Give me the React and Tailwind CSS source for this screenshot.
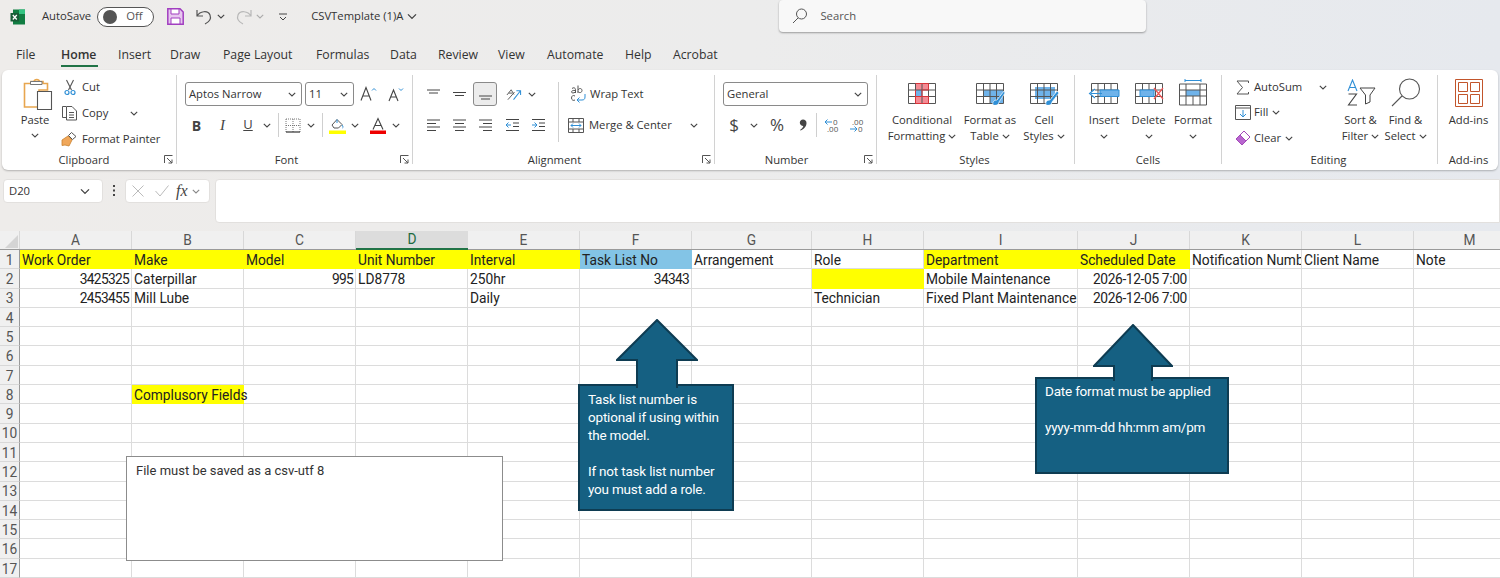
import React from "react";

const UI = "font-['Open_Sans','Noto_Sans',sans-serif]";
const COLS = "grid-cols-[20px_112px_112px_112px_112px_112px_112px_120px_112px_154px_112px_112px_112px_112px]";

function Chev({ className = "", color = "#444" }) {
  return (
    <svg width="8" height="5" viewBox="0 0 8 5" className={"shrink-0 " + className}>
      <path d="M.8.8 4 4 7.2.8" fill="none" stroke={color} strokeWidth="1.1" />
    </svg>
  );
}

function Launcher() {
  return (
    <svg width="9" height="9" viewBox="0 0 9 9" className="absolute right-[3px] top-[3px]">
      <path d="M.5 8V.5H8.5M3 3l5 5M8 4.500V8H4.500" fill="none" stroke="#555" strokeWidth="1" />
    </svg>
  );
}

function Group({ w, label, children, launcher = true, divider = true, pr = "" }) {
  return (
    <div className={"flex flex-col shrink-0 h-[89px] mt-[5px] " + w + " " + (divider ? "border-r border-[#d2d2d2]" : "")}>
      <div className="flex h-[77px] shrink-0">{children}</div>
      <div className={"relative h-[15px] shrink-0 text-center text-[11.25px] leading-[15px] text-[#333] " + pr}>
        {label}
        {launcher && <Launcher />}
      </div>
    </div>
  );
}

function GridIcon({ children, w = 30, h = 24 }) {
  return (
    <svg width={w} height={h} viewBox={`0 0 ${w} ${h}`} className="shrink-0">
      {children}
    </svg>
  );
}

const gridLines = (
  <path d="M1.500 2.500H28.500V22.500H1.500ZM1.500 9H28.500M1.500 15.500H28.500M8.500 2.500V22.500M15 2.500V22.500M21.500 2.500V22.500" fill="none" stroke="#555" strokeWidth="1" />
);

function BigBtn({ w, icon, lines, chevInline, chevBelow }) {
  return (
    <div className={"flex flex-col items-center shrink-0 text-[11.25px] leading-[16px] text-[#333] " + w}>
      <div className="h-[28px] mt-[4px] flex items-center justify-center">{icon}</div>
      <div className="mt-[5px]">
        {lines.map((l, i) => (
          <div key={i} className="flex items-center justify-center gap-[3px] whitespace-nowrap">
            {l}
            {chevInline && i === lines.length - 1 && <Chev />}
          </div>
        ))}
      </div>
      {chevBelow && <Chev className="mt-[6px]" />}
    </div>
  );
}

function Slot({ w, children, className = "" }) {
  return <div className={"flex items-center justify-center shrink-0 " + w + " " + className}>{children}</div>;
}

function Lines({ kind }) {
  const d = {
    top: "M1 3H14M3 6H12",
    mid: "M1 5.500H14M3 8.500H12",
    bot: "M1 9H14M3 12H12",
    left: "M1 2H14M1 5.500H10M1 9H14M1 12.500H10",
    center: "M1 2H14M3 5.500H12M1 9H14M3 12.500H12",
    right: "M1 2H14M5 5.500H14M1 9H14M5 12.500H14",
  }[kind];
  return (
    <svg width="15" height="14" viewBox="0 0 15 14">
      <path d={d} stroke="#444" strokeWidth="1" fill="none" />
    </svg>
  );
}

function SmallRow({ icon, text, className = "", children }) {
  return (
    <div className={"flex items-center text-[11.25px] text-[#333] h-[26px] whitespace-nowrap " + className}>
      <div className="w-[19px] flex justify-center shrink-0">{icon}</div>
      <span className="ml-[1px]">{text}</span>
      {children}
    </div>
  );
}

function Select({ w, text, className = "" }) {
  return (
    <div className={"flex items-center justify-between h-[24px] rounded-[3px] border border-[#8a8a8a] bg-white pl-[3px] pr-[5px] text-[11.25px] text-[#333] " + w + " " + className}>
      <span>{text}</span>
      <Chev />
    </div>
  );
}

function VSep({ className = "" }) {
  return <div className={"w-px h-[24px] bg-[#cfcfcf] shrink-0 " + className} />;
}

function Ribbon() {
  return (
    <div className={"mx-[2px] h-[100px] rounded-[6px] bg-white flex shadow-[0_1px_2px_rgba(0,0,0,0.25)] " + UI}>
      {/* Clipboard */}
      <Group w="w-[175px]" label="Clipboard" pr="pr-[10px]">
        <div className="w-[60px] pl-[6px] flex flex-col items-center text-[11.25px] text-[#333]">
          <svg width="30" height="33" viewBox="0 0 30 33" className="mt-[3px] ml-[5px]">
            <path d="M1.500 5.500H8V3.500H11C11.500 1 16 1 16.500 3.500H20V5.500H24.500V12H16V29H1.500Z" fill="#fff" stroke="#e8a64f" strokeWidth="1.600" />
            <path d="M7.500 3.500H19V6.500H7.500Z" fill="#fff" stroke="#777" strokeWidth="1" />
            <path d="M14.500 13.500H28.500V31.500H14.500Z" fill="#fff" stroke="#555" strokeWidth="1.100" />
          </svg>
          <span className="mt-[1px] leading-[16px]">Paste</span>
          <Chev className="mt-[5px]" />
        </div>
        <div className="flex flex-col -mt-[1px]">
          <SmallRow
            icon={
              <svg width="12" height="17" viewBox="0 0 12 17" className="-ml-[4px]">
                <path d="M2.500 1 7.500 11M9.500 1 4.500 11" stroke="#555" strokeWidth="1.100" fill="none" />
                <circle cx="3" cy="13.500" r="2" fill="none" stroke="#2f8fd6" strokeWidth="1.200" />
                <circle cx="9" cy="13.500" r="2" fill="none" stroke="#2f8fd6" strokeWidth="1.200" />
              </svg>
            }
            text="Cut"
          />
          <SmallRow
            icon={
              <svg width="17" height="16" viewBox="0 0 17 16" className="-ml-[4px]">
                <path d="M5 1.500H1.500V12.500H5" fill="none" stroke="#555" />
                <path d="M5.500 1.500H11L15.500 6V15H5.500ZM8 7.500H13M8 10H13M8 12.500H13" fill="#fff" stroke="#555" />
              </svg>
            }
            text="Copy"
          >
            <Chev className="ml-[22px]" />
          </SmallRow>
          <SmallRow
            icon={
              <svg width="17" height="16" viewBox="0 0 17 16" className="-ml-[4px]">
                <path d="M1 9 7 5l4 4-3 6-4-1-3 .5Z" fill="#f0a75a" stroke="#c9822f" strokeWidth=".8" />
                <path d="M7.500 4.500 10.500 1.500 15 5.500 11.500 8.500Z" fill="#fff" stroke="#555" />
              </svg>
            }
            text="Format Painter"
          />
        </div>
      </Group>
      {/* Font */}
      <Group w="w-[236px]" label="Font" pr="pr-[16px]">
        <div className="flex flex-col pl-[8px] pt-[7px]">
          <div className="flex items-center">
            <Select w="w-[117px]" text="Aptos Narrow" />
            <Select w="w-[49px]" text="11" className="ml-[3px]" />
            <Slot w="w-[17px]" className="ml-[6px]">
              <svg width="17" height="16" viewBox="0 0 17 16">
                <path d="M1 14.500 6 1.500 11 14.500M3 10H9" fill="none" stroke="#444" strokeWidth="1.100" />
                <path d="M12 4.500 14 2.500 16 4.500" fill="none" stroke="#2f8fd6" />
              </svg>
            </Slot>
            <Slot w="w-[17px]" className="ml-[10px]">
              <svg width="16" height="15" viewBox="0 0 16 15">
                <path d="M1 14 5.500 3 10 14M2.500 10H8.500" fill="none" stroke="#444" strokeWidth="1.100" />
                <path d="M11 1.500 13 3.500 15 1.500" fill="none" stroke="#2f8fd6" />
              </svg>
            </Slot>
          </div>
          <div className="flex items-center mt-[7px] h-[24px] text-[#444]">
            <Slot w="w-[13px]" className="ml-[5px] text-[14px] font-bold">B</Slot>
            <Slot w="w-[13px]" className="ml-[13px] italic text-[15px] font-['Liberation_Serif',serif]">I</Slot>
            <Slot w="w-[12px]" className="ml-[13px] underline text-[13px]">U</Slot>
            <Chev className="ml-[9px]" />
            <VSep className="ml-[7px]" />
            <Slot w="w-[16px]" className="ml-[6px]">
              <svg width="16" height="15" viewBox="0 0 16 15">
                <path d="M1 1H15M1 7.500H15M1 1V14M8 1V14M15 1V14" stroke="#777" strokeWidth="1" strokeDasharray="1 1" fill="none" />
                <path d="M1 14H15" stroke="#333" strokeWidth="1.200" />
              </svg>
            </Slot>
            <Chev className="ml-[6px]" />
            <VSep className="ml-[7px]" />
            <Slot w="w-[17px]" className="ml-[6px]">
              <svg width="17" height="17" viewBox="0 0 17 17">
                <path d="M3 8 8 2.500l5 5-3.500 3.500H5Z" fill="#fff" stroke="#555" />
                <path d="M8 2.500V6M13 8c1 1.500 1.500 2.500.5 3" fill="none" stroke="#2f8fd6" />
                <path d="M0 13.500H17V17H0Z" fill="#ffff00" />
              </svg>
            </Slot>
            <Chev className="ml-[5px]" />
            <Slot w="w-[16px]" className="ml-[11px]">
              <svg width="16" height="17" viewBox="0 0 16 17">
                <path d="M3 12.500 8 1.500 13 12.500M5 8.500H11" fill="none" stroke="#444" strokeWidth="1.100" />
                <path d="M0 13.500H16V17H0Z" fill="#ee0000" />
              </svg>
            </Slot>
            <Chev className="ml-[6px]" />
          </div>
        </div>
      </Group>
      {/* Alignment */}
      <Group w="w-[302px]" label="Alignment" pr="pr-[18px]">
        <div className="flex flex-col pl-[12px] pt-[7px] w-[145px]">
          <div className="flex items-center h-[24px]">
            <Slot w="w-[16px]"><Lines kind="top" /></Slot>
            <Slot w="w-[16px]" className="ml-[10px]"><Lines kind="mid" /></Slot>
            <Slot w="w-[24px]" className="ml-[6px] h-[24px] rounded-[3px] border border-[#8a8a8a] bg-[#ececec]"><Lines kind="bot" /></Slot>
            <Slot w="w-[16px]" className="ml-[9px]">
              <svg width="17" height="15" viewBox="0 0 17 15">
                <path d="M1 8 5.500 2.500M5.500 2.500l3 5M2.800 6h4M2 13l7-8" fill="none" stroke="#555" />
                <path d="M8 13 15 4M11 3.500h4.500V8" fill="none" stroke="#2f8fd6" strokeWidth="1.100" />
              </svg>
            </Slot>
            <Chev className="ml-[6px]" />
          </div>
          <div className="flex items-center h-[24px] mt-[7px]">
            <Slot w="w-[16px]"><Lines kind="left" /></Slot>
            <Slot w="w-[16px]" className="ml-[10px]"><Lines kind="center" /></Slot>
            <Slot w="w-[16px]" className="ml-[10px]"><Lines kind="right" /></Slot>
            <Slot w="w-[16px]" className="ml-[11px]">
              <svg width="15" height="14" viewBox="0 0 15 14">
                <path d="M1 1.500H14M8 5H14M8 8.500H14M1 12.500H14" stroke="#444" fill="none" />
                <path d="M6 7H1M3.500 4.500 1 7l2.500 2.500" stroke="#2f8fd6" fill="none" />
              </svg>
            </Slot>
            <Slot w="w-[16px]" className="ml-[10px]">
              <svg width="15" height="14" viewBox="0 0 15 14">
                <path d="M1 1.500H14M8 5H14M8 8.500H14M1 12.500H14" stroke="#444" fill="none" />
                <path d="M1 7H6M3.500 4.500 6 7 3.500 9.500" stroke="#2f8fd6" fill="none" />
              </svg>
            </Slot>
          </div>
        </div>
        <div className="w-px h-[60px] mt-[7px] bg-[#cfcfcf] shrink-0" />
        <div className="flex flex-col pt-[7px] pl-[10px] text-[11.25px] text-[#333] whitespace-nowrap">
          <div className="flex items-center h-[24px]">
            <svg width="17" height="18" viewBox="0 0 17 18" className="mr-[3px] ml-[1px]">
              <path d="M2 3.500C3.500 2 5.500 3 5.500 4.500V8M5.500 5.500C3 5 1.500 6 1.500 7S3.500 8.500 5.500 7M8 .5V8M8 5C9.500 2.500 12 3.500 12 5.500S9.500 8.500 8 6.500M5 11C3 9.800 1.500 11 1.500 13S3.500 16 5 15" fill="none" stroke="#555" />
              <path d="M15 9v3c0 2-1 3-3 3H7M9.500 12.500 7 15l2.500 2.500" fill="none" stroke="#2f8fd6" />
            </svg>
            Wrap Text
          </div>
          <div className="flex items-center h-[24px] mt-[7px] pt-[1px]">
            <svg width="16" height="15" viewBox="0 0 16 15" className="mr-[5px] -ml-[1px]">
              <path d="M.5.500H15.500V14.500H.5ZM.5 4H15.500M.5 11H15.500M5 .5V4M11 .5V4M5 11V14.500M11 11V14.500" fill="#fff" stroke="#555" />
              <path d="M3 7.500H13M5 5.500 3 7.500 5 9.500M11 5.500l2 2-2 2" fill="none" stroke="#2f8fd6" />
            </svg>
            Merge &amp; Center
            <Chev className="ml-[18px]" />
          </div>
        </div>
      </Group>
      {/* Number */}
      <Group w="w-[162px]" label="Number" pr="pr-[18px]">
        <div className="flex flex-col pl-[8px] pt-[7px]">
          <Select w="w-[145px]" text="General" />
          <div className="flex items-center h-[24px] mt-[7px] text-[#444]">
            <Slot w="w-[12px]" className="ml-[5px] text-[17px]">$</Slot>
            <Chev className="ml-[10px]" />
            <Slot w="w-[18px]" className="ml-[10px] text-[17px]">%</Slot>
            <Slot w="w-[10px]" className="ml-[12px]">
              <svg width="8" height="12" viewBox="0 0 8 12">
                <path d="M4 .5C6 .5 7.500 2 7.500 4 7.500 7.500 5 10 1.500 11.500L1 11C3 9.500 4 8.500 4.300 7 2.500 7 .8 5.800.8 3.800.8 1.800 2.200.5 4 .5Z" fill="#444" />
              </svg>
            </Slot>
            <VSep className="ml-[8px]" />
            <Slot w="w-[18px]" className="ml-[7px]">
              <svg width="18" height="15" viewBox="0 0 18 15">
                <text x="9" y="6.500" fontSize="8" fill="#555" fontFamily="Open Sans">0</text>
                <text x="3" y="14" fontSize="8" fill="#555" fontFamily="Open Sans">.00</text>
                <path d="M8 4H1M3.500 1.500 1 4l2.500 2.500" fill="none" stroke="#2f8fd6" />
              </svg>
            </Slot>
            <Slot w="w-[18px]" className="ml-[7px]">
              <svg width="18" height="15" viewBox="0 0 18 15">
                <text x="3" y="6.500" fontSize="8" fill="#555" fontFamily="Open Sans">.00</text>
                <text x="9" y="14" fontSize="8" fill="#555" fontFamily="Open Sans">0</text>
                <path d="M1 11H8M5.500 8.500 8 11l-2.500 2.500" fill="none" stroke="#2f8fd6" />
              </svg>
            </Slot>
          </div>
        </div>
      </Group>
      {/* Styles */}
      <Group w="w-[198px]" label="Styles" launcher={false} pr="pr-[2px]">
        <div className="w-[5px] shrink-0" />
        <BigBtn
          w="w-[80px]"
          lines={["Conditional", "Formatting"]}
          chevInline
          icon={
            <GridIcon>
              <path d="M8.500 2.500H21.500V9H8.500ZM8.500 15.500H21.500V22.500H8.500Z" fill="#f48b94" />
              <path d="M8.500 9H15V15.500H8.500Z" fill="#6fb3ea" />
              {gridLines}
              <path d="M8.500 2.500H21.500V9H15V15.500H8.500V9M8.500 15.500H21.500V22.500H8.500Z" fill="none" stroke="#d9343a" />
            </GridIcon>
          }
        />
        <BigBtn
          w="w-[56px]"
          lines={["Format as", "Table"]}
          chevInline
          icon={
            <GridIcon>
              <path d="M8.500 9H28.500V22.500H15V15.500H8.500Z" fill="#6fb3ea" />
              {gridLines}
              <path d="M18 24C17 20 20 19 22 19L29 10 30 12 24 21C24 24 20 25 18 24Z" fill="#2f8fd6" stroke="#fff" strokeWidth=".7" />
            </GridIcon>
          }
        />
        <BigBtn
          w="w-[52px]"
          lines={["Cell", "Styles"]}
          chevInline
          icon={
            <GridIcon>
              <path d="M6 6H26V18H6Z" fill="#6fb3ea" />
              {gridLines}
              <path d="M17 24C16 20 19 19 21 19L28 10 30 12 23 21C23 24 19 25 17 24Z" fill="#2f8fd6" stroke="#fff" strokeWidth=".7" />
            </GridIcon>
          }
        />
      </Group>
      {/* Cells */}
      <Group w="w-[147px]" label="Cells" launcher={false}>
        <div className="w-[7px] shrink-0" />
        <BigBtn
          w="w-[44px]"
          lines={["Insert"]}
          chevBelow
          icon={
            <GridIcon w={32}>
              <path d="M3.500 2.500H29.500V22.500H3.500ZM3.500 9H29.500M3.500 15.500H29.500M10 2.500V22.500M16.500 2.500V22.500M23 2.500V22.500" fill="none" stroke="#555" />
              <path d="M12 9H31V15.500H12Z" fill="#6fb3ea" stroke="#2f8fd6" />
              <path d="M14 12.500H3M7 8 1.500 12.500 7 17" fill="#fff" stroke="#2f8fd6" strokeWidth="1.100" />
            </GridIcon>
          }
        />
        <BigBtn
          w="w-[45px]"
          lines={["Delete"]}
          chevBelow
          icon={
            <GridIcon w={30}>
              {gridLines}
              <path d="M6 9H20V15.500H6Z" fill="#6fb3ea" stroke="#2f8fd6" />
              <path d="M20 7 29 18M29 7 20 18" stroke="#ee5555" strokeWidth="1.200" />
            </GridIcon>
          }
        />
        <BigBtn
          w="w-[44px]"
          lines={["Format"]}
          chevBelow
          icon={
            <svg width="30" height="28" viewBox="0 0 30 28" className="shrink-0">
              <path d="M7 1.500H23M7 0V3M23 0V3" stroke="#2f8fd6" fill="none" />
              <path d="M8 11H22V17H8Z" fill="#6fb3ea" />
              <path d="M1.500 5H28.500V26H1.500ZM1.500 11H28.500M1.500 17H28.500M8 5V26M22 5V26M15 17V26" fill="none" stroke="#555" />
            </svg>
          }
        />
      </Group>
      {/* Editing */}
      <Group w="w-[216px]" label="Editing" launcher={false} pr="pr-[2px]">
        <div className="flex flex-col pl-[11px] w-[116px] shrink-0 -mt-[1px]">
          <SmallRow
            icon={
              <svg width="13" height="15" viewBox="0 0 13 15">
                <path d="M12.500 3V1H1L6.500 7.500 1 14H12.500V12" fill="none" stroke="#555" />
              </svg>
            }
            text="AutoSum"
            className="gap-[1px]"
          >
            <Chev className="ml-[16px]" />
          </SmallRow>
          <SmallRow
            icon={
              <svg width="16" height="15" viewBox="0 0 16 15">
                <path d="M.5.500H15.500V14.500H.5ZM.5 3H15.500" fill="none" stroke="#555" />
                <path d="M8 5V12M5 9l3 3 3-3" fill="none" stroke="#2f8fd6" />
              </svg>
            }
            text="Fill"
            className="gap-[1px] -mt-[1px]"
          >
            <Chev className="ml-[3px]" />
          </SmallRow>
          <SmallRow
            icon={
              <svg width="16" height="16" viewBox="0 0 16 16">
                <path d="M1 9 9 1l6 6-8 8Z" fill="#fff" stroke="#a348b8" />
                <path d="M1 9 5 5l6 6-4 4Z" fill="#b866cf" stroke="#a348b8" />
              </svg>
            }
            text="Clear"
            className="gap-[1px]"
          >
            <Chev className="ml-[3px]" />
          </SmallRow>
        </div>
        <BigBtn
          w="w-[45px]"
          lines={["Sort &", "Filter"]}
          chevInline
          icon={
            <svg width="30" height="28" viewBox="0 0 30 28">
              <path d="M2 12 6.500 1 11 12M3.500 8.500H9.500" fill="none" stroke="#2f8fd6" strokeWidth="1.100" />
              <path d="M2.500 15H10.500L2.500 26H11" fill="none" stroke="#444" strokeWidth="1.100" />
              <path d="M14 9H29L24 16V23L19.500 25V16Z" fill="#fff" stroke="#444" />
            </svg>
          }
        />
        <BigBtn
          w="w-[45px]"
          lines={["Find &", "Select"]}
          chevInline
          icon={
            <svg width="30" height="30" viewBox="0 0 30 30">
              <circle cx="18.500" cy="11" r="10" fill="none" stroke="#555" strokeWidth="1.100" />
              <path d="M11 18 1 28" stroke="#555" strokeWidth="1.100" />
            </svg>
          }
        />
      </Group>
      {/* Add-ins */}
      <Group w="w-[61px]" label="Add-ins" launcher={false} divider={false}>
        <BigBtn
          w="w-full"
          lines={["Add-ins"]}
          icon={
            <svg width="28" height="28" viewBox="0 0 28 28">
              <path d="M.5.500H27.500V27.500H.5Z" fill="none" stroke="#c2552b" />
              <path d="M3.500 3.500H12.500V12.500H3.500ZM15.500 3.500H24.500V12.500H15.500ZM3.500 15.500H12.500V24.500H3.500ZM15.500 15.500H24.500V24.500H15.500Z" fill="none" stroke="#c2552b" />
            </svg>
          }
        />
      </Group>
    </div>
  );
}

function TitleBar() {
  return (
    <div className={"h-[33px] flex items-center text-[#333] text-[11.25px] whitespace-nowrap " + UI}>
      <svg width="16" height="16" viewBox="0 0 16 16" className="ml-[10px] shrink-0">
        <path d="M3 0.500H15V15.500H3Z" fill="#107c41" />
        <path d="M9 .5H15V5H9Z" fill="#33c481" />
        <path d="M.5 4H9V12.500H.5Z" fill="#185c37" />
        <path d="M2.800 6 6.800 10.500M6.800 6 2.800 10.500" stroke="#fff" strokeWidth="1.300" />
      </svg>
      <span className="ml-[16px]">AutoSave</span>
      <div className="ml-[6px] w-[57px] h-[20px] rounded-full border border-[#555] flex items-center pl-[5px] shrink-0 bg-white">
        <div className="w-[14px] h-[14px] rounded-full bg-[#555]" />
        <span className="ml-[9px] text-[#555]">Off</span>
      </div>
      <svg width="17" height="17" viewBox="0 0 17 17" className="ml-[13px] shrink-0">
        <path d="M.8.8H13L16.200 4V16.200H.8Z" fill="#e7c7ef" stroke="#a13fc0" strokeWidth="1.500" />
        <path d="M4 1H12V6H4ZM4 10H13V16H4Z" fill="#fff" stroke="#a13fc0" />
      </svg>
      <svg width="17" height="17" viewBox="0 0 17 17" className="ml-[12px] shrink-0">
        <path d="M1 2V8H7M1 8C4 3 12 2 14 7 15.500 11 13 14 9 16" fill="none" stroke="#555" strokeWidth="1.200" />
      </svg>
      <Chev className="ml-[4px]" />
      <svg width="17" height="17" viewBox="0 0 17 17" className="ml-[10px] shrink-0">
        <path d="M16 2V8H10M16 8C13 3 5 2 3 7 1.500 11 4 14 8 16" fill="none" stroke="#b8b8b8" strokeWidth="1.200" />
      </svg>
      <Chev className="ml-[4px]" color="#aaa" />
      <svg width="8" height="8" viewBox="0 0 8 8" className="ml-[15px] shrink-0">
        <path d="M0 1H8M1 4 4 7 7 4" fill="none" stroke="#444" />
      </svg>
      <span className="ml-[24px]">CSVTemplate (1)A</span>
      <Chev className="ml-[5px] scale-125" />
      <div className="ml-[363px] w-[367px] h-[32px] -mt-[1px] rounded-[4px] bg-[#f8f8f8] shadow-[0_1px_2px_rgba(0,0,0,0.35)] flex items-center pl-[13px] text-[#555] shrink-0">
        <svg width="16" height="16" viewBox="0 0 16 16">
          <circle cx="9.500" cy="6" r="5" fill="none" stroke="#555" />
          <path d="M6 10 1 15" stroke="#555" />
        </svg>
        <span className="ml-[12px]">Search</span>
      </div>
    </div>
  );
}

function Tabs() {
  const tabs = [
    ["File", "w-[50px] pl-[16px]"],
    ["Home", "w-[57px] pl-[11px]"],
    ["Insert", "w-[53px] pl-[11px]"],
    ["Draw", "w-[52px] pl-[10px]"],
    ["Page Layout", "w-[94px] pl-[11px]"],
    ["Formulas", "w-[74px] pl-[10px]"],
    ["Data", "w-[48px] pl-[10px]"],
    ["Review", "w-[60px] pl-[10px]"],
    ["View", "w-[49px] pl-[10px]"],
    ["Automate", "w-[78px] pl-[10px]"],
    ["Help", "w-[48px] pl-[10px]"],
    ["Acrobat", "w-[60px] pl-[10px]"],
  ];
  return (
    <div className={"h-[37px] flex text-[12.25px] text-[#333] " + UI}>
      {tabs.map(([t, c]) => (
        <div key={t} className={"relative shrink-0 h-[37px] pt-[13px] leading-[18px] " + c}>
          {t === "Home" ? <span className="font-semibold">{t}</span> : <span>{t}</span>}
          {t === "Home" && <div className="absolute left-[11px] w-[37px] top-[32px] h-[2px] bg-[#217346]" />}
        </div>
      ))}
    </div>
  );
}

function FormulaBar() {
  return (
    <div className={"h-[61px] flex items-start pt-[9px] pl-[3px] " + UI}>
      <div className="w-[100px] h-[24px] rounded-[4px] bg-white border border-[#e2e0de] flex items-center pl-[5px] text-[11.25px] text-[#333] shrink-0">
        D20
        <Chev className="ml-[51px] scale-125" />
      </div>
      <svg width="4" height="14" viewBox="0 0 4 14" className="ml-[9px] mt-[5px] shrink-0">
        <path d="M1 2H3M1 6.500H3M1 11H3" stroke="#444" strokeWidth="2" />
      </svg>
      <div className="ml-[9px] w-[85px] h-[24px] rounded-[4px] bg-white border border-[#e2e0de] flex items-center pl-[6px] shrink-0">
        <svg width="12" height="12" viewBox="0 0 12 12" className="shrink-0">
          <path d="M.5.500 11.500 11.500M11.500.5.5 11.500" stroke="#bbb" />
        </svg>
        <svg width="14" height="12" viewBox="0 0 14 12" className="ml-[11px] shrink-0">
          <path d="M.5 6 5 11 13.500.5" stroke="#bbb" fill="none" />
        </svg>
        <span className="ml-[7px] italic text-[16px] text-[#444] font-['Liberation_Serif',serif]">fx</span>
        <Chev className="ml-[4px]" color="#888" />
      </div>
      <div className="ml-[5px] flex-1 h-[44px] rounded-l-[4px] bg-white border border-[#e2e0de]" />
    </div>
  );
}

const Y = "bg-[#ffff00] border-[#ffff00]";
const rows = [
  [["Work Order", "", Y], ["Make", "", Y], ["Model", "", Y], ["Unit Number", "", Y], ["Interval", "", Y], ["Task List No", "", "bg-[#83c4e6] border-[#83c4e6]"], ["Arrangement"], ["Role"], ["Department", "", Y], ["Scheduled Date", "", Y], ["Notification Number", "clip"], ["Client Name"], ["Note"]],
  [["3425325", "n"], ["Caterpillar"], ["995", "n"], ["LD8778"], ["250hr"], ["34343", "n"], [""], ["", "", Y], ["Mobile Maintenance"], ["2026-12-05 7:00", "d"], [""], [""], [""]],
  [["2453455", "n"], ["Mill Lube"], [""], [""], ["Daily"], [""], [""], ["Technician"], ["Fixed Plant Maintenance"], ["2026-12-06 7:00", "d"], [""], [""], [""]],
];
const headers = ["A", "B", "C", "D", "E", "F", "G", "H", "I", "J", "K", "L", "M"];
const hdr = "flex items-center justify-center pt-[1px] bg-[#f0f0f0] border-r border-[#d8d8d8] text-[#555]";

function Sheet() {
  const all = [];
  for (let r = 0; r < 18; r++) {
    const row = rows[r] || headers.map(() => [""]);
    all.push(
      <div key={"h" + r} className="flex items-center justify-center pt-[3px] bg-[#f0f0f0] border-r border-b border-b-[#d8d8d8] border-r-[#9a9a9a] text-[#555]">{r + 1}</div>
    );
    row.forEach((c, i) => {
      let [text, mode = "", cls = ""] = c;
      if (r === 7 && i === 1) {
        text = "Complusory Fields";
        cls = Y;
      }
      all.push(
        <div
          key={r + "-" + i}
          className={
            "flex items-center pt-[3px] px-[2px] whitespace-nowrap border-r border-b text-[#222] " +
            (mode === "n" ? "justify-end tracking-[-0.7px] " : "") +
            (mode === "d" ? "justify-end tracking-[-0.35px] " : "") +
            (mode === "clip" ? "overflow-hidden " : "") +
            (cls || "border-[#dcdcdc]")
          }
        >
          <span className={r === 7 && i === 1 ? "relative z-10" : ""}>{text}</span>
        </div>
      );
    });
  }
  return (
    <div className="relative h-[347px] overflow-hidden bg-white font-['Roboto','Liberation_Sans',sans-serif] text-[13.75px] leading-none">
      <div className={"grid w-[1526px] h-[19px] border-b border-[#9a9a9a] " + COLS}>
        <div className="bg-[#f0f0f0] flex items-end justify-end border-r border-[#d8d8d8]">
          <div className="w-0 h-0 mr-[1px] mb-[1px] border-l-[13px] border-l-transparent border-b-[13px] border-b-[#d4d4d4]" />
        </div>
        {headers.map((h) => (
          <div key={h} className={h === "D" ? "flex items-center justify-center pt-[1px] bg-[#dcdcdc] border-b-2 border-[#217346] text-[#1d6b41] -mb-px" : hdr}>
            {h}
          </div>
        ))}
      </div>
      <div className={"grid auto-rows-[19.3px] w-[1526px] " + COLS}>{all}</div>

      {/* shapes over the sheet */}
      <Callout
        arrow="absolute left-[36px] -top-[67px]"
        box="left-[578px] top-[153px] w-[156px] h-[127px] pt-[4px]"
        w={80}
        tipH={67}
        shaft={[20, 60]}
        head={40}
      >
        Task list number is
        <br />
        optional if using within
        <br />
        the model.
        <br />
        <br />
        If not task list number
        <br />
        you must add a role.
      </Callout>
      <Callout
        arrow="absolute left-[56px] -top-[55px]"
        box="left-[1035px] top-[146px] w-[194px] h-[97px] pt-[3px]"
        w={78}
        tipH={55}
        shaft={[20, 58]}
        head={41}
      >
        Date format must be applied
        <br />
        <br />
        yyyy-mm-dd hh:mm am/pm
      </Callout>
      <div className="absolute left-[126px] top-[225px] w-[377px] h-[105px] bg-white border border-[#8c8c8c] pl-[9px] pt-[6px] text-[13px] leading-[16px] text-[#333]">
        File must be saved as a csv-utf 8
      </div>
    </div>
  );
}

function Callout({ box, arrow, w, tipH, shaft, head, children }) {
  return (
    <div className={"absolute bg-[#156082] border-2 border-[#0e3c52] px-[8px] text-white text-[13.5px] leading-[18px] tracking-[-0.2px] whitespace-nowrap " + box}>
      <svg width={w + 2} height={tipH + 2} viewBox={`-1 -1 ${w + 2} ${tipH + 2}`} className={arrow}>
        <path
          d={`M${w / 2} 0 L${w} ${head} H${shaft[1]} V${tipH} H${shaft[0]} V${head} H0 Z`}
          fill="#156082"
          stroke="#0e3c52"
          strokeWidth="2"
        />
        <path d={`M${shaft[0] + 1} ${tipH - 2} H${shaft[1] - 1} V${tipH + 1} H${shaft[0] + 1} Z`} fill="#156082" />
      </svg>
      <div className="relative">{children}</div>
    </div>
  );
}

export default function App() {
  return (
    <div className="w-[1500px] h-[578px] overflow-hidden bg-white">
      <div className="bg-[linear-gradient(90deg,#eeecea_0%,#ececec_50%,#e6e9ee_100%)] h-[231px]">
        <TitleBar />
        <Tabs />
        <Ribbon />
        <FormulaBar />
      </div>
      <Sheet />
    </div>
  );
}
